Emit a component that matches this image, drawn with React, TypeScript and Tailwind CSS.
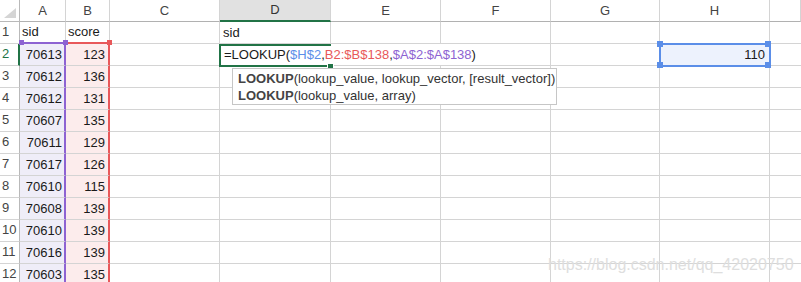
import React from 'react';

const cols = ['A', 'B', 'C', 'D', 'E', 'F', 'G', 'H', ''];

const data: [number, number][] = [
	[70613, 123],
	[70612, 136],
	[70612, 131],
	[70607, 135],
	[70611, 129],
	[70617, 126],
	[70610, 115],
	[70608, 139],
	[70610, 139],
	[70616, 139],
	[70603, 135],
];

const font = { fontFamily: '"Liberation Sans", Arial, sans-serif' };

const Handle: React.FC<{ className: string }> = ({ className }) => (
	<span className={`absolute z-20 w-[5px] h-[5px] ${className}`} />
);

const App: React.FC = () => {
	const rowNums = Array.from({ length: 12 }, (_, i) => i + 1);

	return (
		<div
			className="relative w-[801px] h-[282px] overflow-hidden bg-white text-[13px] text-[#1a1a1a]"
			style={font}
		>
			<div className="grid grid-cols-[20px_46px_44px_110px_111px_110px_110px_109px_110px_31px] auto-rows-[22px]">
				{/* Corner */}
				<div className="flex items-end justify-end p-[3px] border-r border-b border-[#b9b9b9]">
					<span className="w-0 h-0 border-l-[12px] border-l-transparent border-b-[10px] border-b-[#d5d5d5]" />
				</div>

				{/* Column headers */}
				{cols.map((c) =>
					c === 'D' ? (
						<div
							key={c}
							className="flex items-center justify-center bg-[#e1e1e1] border-r border-[#d4d4d4] border-b-2 border-b-[#217346] text-[#333]"
						>
							{c}
						</div>
					) : (
						<div
							key={c || 'last'}
							className="flex items-center justify-center border-r border-[#d4d4d4] border-b border-b-[#b1b1b1] text-[#444]"
						>
							{c}
						</div>
					)
				)}

				{rowNums.map((r) => (
					<React.Fragment key={r}>
						{/* Row header */}
						<div
							className={`flex items-end pb-[2px] pl-[2px] border-b border-[#d4d4d4] ${
								r === 2
									? 'border-r-2 border-r-[#217346] text-[#217346]'
									: 'border-r border-r-[#b9b9b9] text-[#444]'
							}`}
						>
							{r}
						</div>

						{/* A */}
						{r === 1 ? (
							<div className="relative flex items-center pl-[2px] border-r border-[#d4d4d4] border-b-2 border-b-[#8d63d2]">
								sid
								<Handle className="-left-[1px] -bottom-[3px] bg-[#8d63d2]" />
							</div>
						) : (
							<div className="flex items-center justify-end pr-[2px] bg-[#efedf8] border-b border-[#d4d4d4] border-r-2 border-r-[#8d63d2]">
								{data[r - 2][0]}
							</div>
						)}

						{/* B */}
						{r === 1 ? (
							<div className="relative flex items-center pl-[2px] border-r border-[#d4d4d4] border-b-2 border-b-[#e8585a]">
								score
								<Handle className="-left-[3px] -bottom-[3px] bg-[#8d63d2]" />
								<Handle className="-right-[3px] -bottom-[3px] bg-[#e8585a]" />
							</div>
						) : (
							<div className="flex items-center justify-end pr-[3px] bg-[#fcecec] border-b border-[#d4d4d4] border-r-2 border-r-[#e8585a]">
								{data[r - 2][1]}
							</div>
						)}

						{/* C */}
						<div className="border-r border-b border-[#d4d4d4]" />

						{/* D */}
						{r === 2 ? (
							<div className="relative z-10 flex items-center pl-[4px] pt-[1px] whitespace-nowrap border-b border-[#d4d4d4]">
								<span className="absolute -left-[1px] top-0 -bottom-[2px] right-0 border-2 border-r-0 border-[#217346]" />
								<span className="relative">
									=LOOKUP(
									<span className="text-[#5b8ee8]">$H$2</span>,
									<span className="text-[#e8585a]">B2:$B$138</span>,
									<span className="text-[#8d63d2]">$A$2:$A$138</span>)
								</span>
								<Handle className="left-[107px] -bottom-[5px] w-[7px] h-[7px] bg-[#217346] border border-white" />
							</div>
						) : (
							<div className="flex items-center pl-[3px] border-r border-b border-[#d4d4d4]">
								{r === 1 ? 'sid' : ''}
							</div>
						)}

						{/* E, F */}
						<div className={`border-b border-[#d4d4d4] ${r === 2 ? '' : 'border-r'}`} />
						<div className="border-r border-b border-[#d4d4d4]" />

						{/* G */}
						<div className="border-r border-b border-[#d4d4d4]" />

						{/* H */}
						{r === 2 ? (
							<div className="relative z-10 flex items-center justify-end pr-[4px] bg-[#edf2fd] border-r border-b border-[#d4d4d4] outline-2 outline-[#5b8ee8] -outline-offset-1">
								110
								<Handle className="-left-[3px] -top-[3px] w-[6px] h-[6px] bg-[#5b8ee8]" />
								<Handle className="-right-[2px] -top-[3px] w-[6px] h-[6px] bg-[#5b8ee8]" />
								<Handle className="-left-[3px] -bottom-[3px] w-[6px] h-[6px] bg-[#5b8ee8]" />
								<Handle className="-right-[2px] -bottom-[3px] w-[6px] h-[6px] bg-[#5b8ee8]" />
							</div>
						) : (
							<div className="border-r border-b border-[#d4d4d4]" />
						)}

						<div className="border-b border-[#d4d4d4]" />
					</React.Fragment>
				))}
			</div>

			{/* Formula tooltip */}
			<div className="absolute z-30 left-[232px] top-[68px] w-[325px] h-[37px] border border-[#c6c6c6] bg-white pl-[5px] pt-[1px] text-[13px] leading-[17px] text-[#333]">
				<div>
					<span className="font-bold text-[#444]">LOOKUP</span>(lookup_value, lookup_vector, [result_vector])
				</div>
				<div>
					<span className="font-bold text-[#444]">LOOKUP</span>(lookup_value, array)
				</div>
			</div>

			{/* Watermark */}
			<div className="absolute z-30 left-[548px] top-[253px] text-[16px] text-[#dedede] whitespace-nowrap">
				https://blog.csdn.net/qq_42020750
			</div>
		</div>
	);
};

export default App;
